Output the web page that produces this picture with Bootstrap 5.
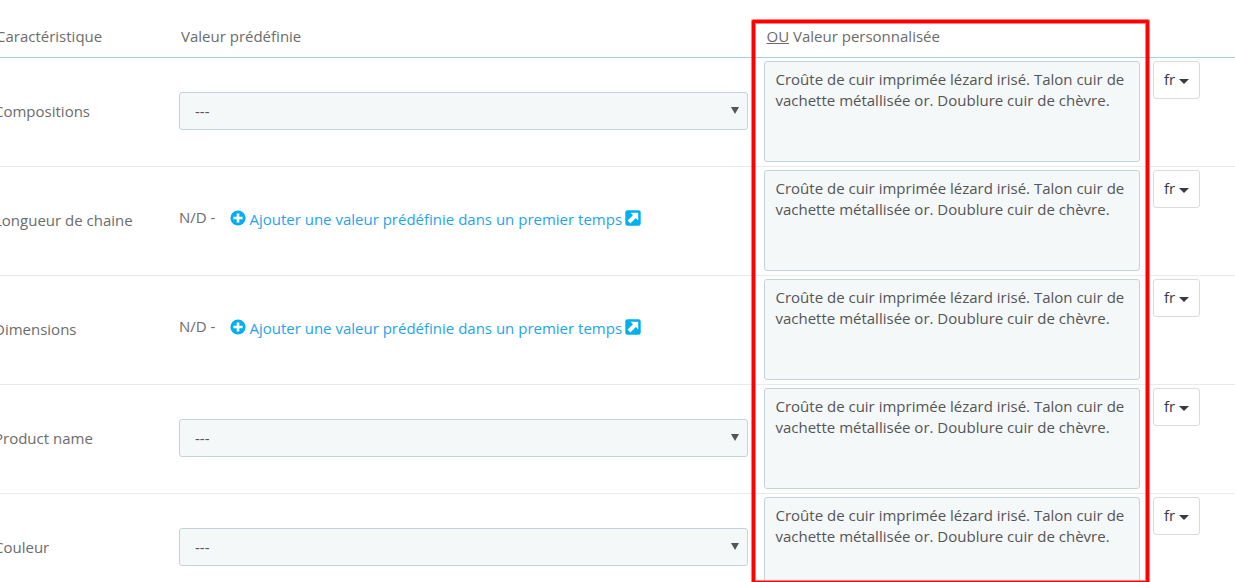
<!DOCTYPE html>
<html lang="fr">
<head>
<meta charset="utf-8">
<meta name="viewport" content="width=device-width, initial-scale=1">
<title>Caractéristiques</title>
<link href="https://cdn.jsdelivr.net/npm/bootstrap@5.3.0/dist/css/bootstrap.min.css" rel="stylesheet">
<style>
  body { font: 15px/21px "Open Sans", sans-serif; color: #6c6c6c; }
  .page { padding-top: 20px; }
  .features { table-layout: fixed; width: calc(100% + 8px); margin-left: -8px; }
  .features th, .features td { padding: 3px 4px 4px 5px; font-weight: 400; }
  .features th { padding: 6px 7px 10px; border-bottom: 1px solid #a3cfdf; }
  .features th:first-child { padding-left: 4px; }
  .features td { border-bottom: 1px solid #e8eaeb; }
  .features td:first-child { padding-left: 2px; }
  .features td.choice { padding-bottom: 6px; }
  .features th.custom { padding-left: 14px; }
  .features td.custom { padding-left: 12px; padding-right: 9px; }
  .features td.lang { padding-left: 4px; }
  .col-name { width: 182px; }
  .col-custom { width: 31.9%; }
  .col-lang { width: 86px; }
  .field { background-color: #f4f8f9; border: 1px solid #c3d4da; border-radius: 3px; color: #555; font-size: 15px; line-height: 21px; }
  select.field { height: 38px; padding: 8px 15px; background-size: 8px 7px; background-position: right 8px center;
    background-image: url("data:image/svg+xml,%3Csvg xmlns='http://www.w3.org/2000/svg' viewBox='0 0 8 7'%3E%3Cpath fill='%23555' d='M0 0h8L4 7z'/%3E%3C/svg%3E"); }
  textarea.field { height: 101px; padding: 7px 10px; resize: none; overflow: hidden; }
  .lang-btn { height: 38px; padding: 6px 10px 8px; font-size: 15px; line-height: 21px; color: #363a41; background: #fff; border: 1px solid #dadcdd; border-radius: 3px; }
  .lang-btn::after { border-width: 5px 5px 0; margin-left: 4px; vertical-align: 1px; }
  .add-link { color: #1fa4ea; text-decoration: none; gap: 3px; padding-top: 2px; }
  .add-link svg { fill: #00aff0; margin-top: 1px; }
  .hint { padding-bottom: 4px; gap: 15px; }
  .frame { top: 0; left: 0; right: 0; height: calc(100vh - 18px); border: 3px solid #f00; border-radius: 1px; box-shadow: 0 0 0 1px #ff000080, inset 0 0 0 1px #ff000080; pointer-events: none; z-index: 2; }
</style>
</head>
<body>
<svg class="d-none">
  <symbol id="plus" viewBox="0 0 16 16"><circle cx="8" cy="8" r="7.6"/><path fill="#fff" d="M6.7 3.4h2.6v3.3h3.3v2.6H9.3v3.3H6.7V9.3H3.4V6.7h3.3z"/></symbol>
  <symbol id="external" viewBox="0 0 16 16"><rect x=".3" y=".3" width="15.4" height="15.4" rx="2.2"/><path fill="#fff" d="M5.6 2.8h7.6v7.6l-2.4-2.4-5.4 5.4-2.8-2.8L8 5.2z"/></symbol>
</svg>
<main class="page vh-100 overflow-hidden">
  <table class="features align-middle">
    <colgroup><col class="col-name"><col><col class="col-custom"><col class="col-lang"></colgroup>
    <thead>
      <tr>
        <th scope="col">Caractéristique</th>
        <th scope="col">Valeur prédéfinie</th>
        <th scope="col" class="custom position-relative"><u>OU</u> Valeur personnalisée<div class="frame position-absolute"></div></th>
        <th></th>
      </tr>
    </thead>
    <tbody>
      <tr>
        <td><label for="f1">Compositions</label></td>
        <td class="choice"><select id="f1" class="form-select field"><option>---</option></select></td>
        <td class="custom"><textarea class="form-control field" aria-label="Compositions, valeur personnalisée">Croûte de cuir imprimée lézard irisé. Talon cuir de vachette métallisée or. Doublure cuir de chèvre.</textarea></td>
        <td class="lang align-top"><button type="button" class="btn dropdown-toggle lang-btn">fr</button></td>
      </tr>
      <tr>
        <td><label for="t2">Longueur de chaine</label></td>
        <td><div class="hint d-flex"><span>N/D -</span><a href="#" class="add-link d-flex"><svg width="16" height="16"><use href="#plus"/></svg><span>Ajouter une valeur prédéfinie dans un premier temps</span><svg width="16" height="16"><use href="#external"/></svg></a></div></td>
        <td class="custom"><textarea id="t2" class="form-control field">Croûte de cuir imprimée lézard irisé. Talon cuir de vachette métallisée or. Doublure cuir de chèvre.</textarea></td>
        <td class="lang align-top"><button type="button" class="btn dropdown-toggle lang-btn">fr</button></td>
      </tr>
      <tr>
        <td><label for="t3">Dimensions</label></td>
        <td><div class="hint d-flex"><span>N/D -</span><a href="#" class="add-link d-flex"><svg width="16" height="16"><use href="#plus"/></svg><span>Ajouter une valeur prédéfinie dans un premier temps</span><svg width="16" height="16"><use href="#external"/></svg></a></div></td>
        <td class="custom"><textarea id="t3" class="form-control field">Croûte de cuir imprimée lézard irisé. Talon cuir de vachette métallisée or. Doublure cuir de chèvre.</textarea></td>
        <td class="lang align-top"><button type="button" class="btn dropdown-toggle lang-btn">fr</button></td>
      </tr>
      <tr>
        <td><label for="f4">Product name</label></td>
        <td class="choice"><select id="f4" class="form-select field"><option>---</option></select></td>
        <td class="custom"><textarea class="form-control field" aria-label="Product name, valeur personnalisée">Croûte de cuir imprimée lézard irisé. Talon cuir de vachette métallisée or. Doublure cuir de chèvre.</textarea></td>
        <td class="lang align-top"><button type="button" class="btn dropdown-toggle lang-btn">fr</button></td>
      </tr>
      <tr>
        <td><label for="f5">Couleur</label></td>
        <td class="choice"><select id="f5" class="form-select field"><option>---</option></select></td>
        <td class="custom"><textarea class="form-control field" aria-label="Couleur, valeur personnalisée">Croûte de cuir imprimée lézard irisé. Talon cuir de vachette métallisée or. Doublure cuir de chèvre.</textarea></td>
        <td class="lang align-top"><button type="button" class="btn dropdown-toggle lang-btn">fr</button></td>
      </tr>
    </tbody>
  </table>
</main>
<script src="https://cdn.jsdelivr.net/npm/bootstrap@5.3.0/dist/js/bootstrap.bundle.min.js"></script>
</body>
</html>
